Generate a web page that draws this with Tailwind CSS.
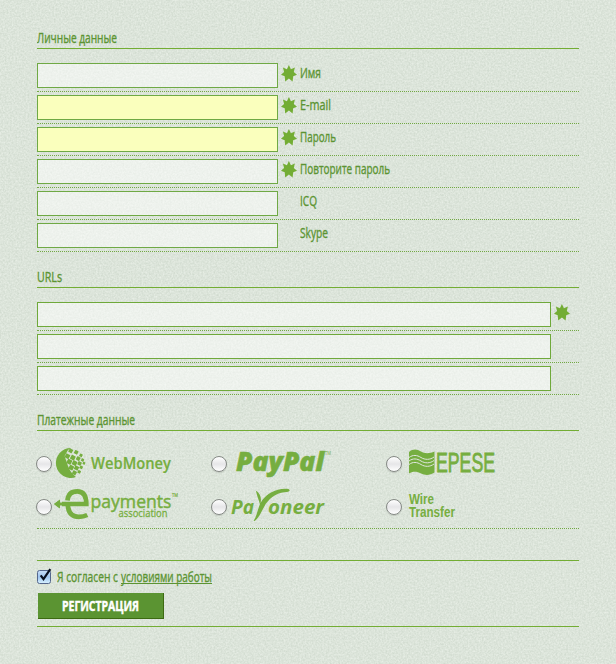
<!DOCTYPE html>
<html lang="ru"><head><meta charset="utf-8"><title>Регистрация</title>
<script src="https://cdn.jsdelivr.net/npm/@tailwindcss/browser@4"></script></head>
<body class="relative h-[664px] w-[616px] overflow-hidden bg-[#dce4db]" style="font-family:'Open Sans','Noto Sans',sans-serif">
<svg class="absolute inset-0 -z-10" width="616" height="664" aria-hidden="true">
<filter id="grain" x="0" y="0" width="100%" height="100%" color-interpolation-filters="sRGB"><feTurbulence type="fractalNoise" baseFrequency="0.57" numOctaves="2" seed="8"/><feColorMatrix values="0.13 0 0 0 0.797  0.11 0 0 0 0.84  0.13 0 0 0 0.79  0 0 0 0 1"/></filter>
<rect width="616" height="664" filter="url(#grain)"/></svg>
<svg class="hidden"><symbol id="star" viewBox="0 0 16 17"><path fill="#73ad34" d="M7.9 0 9.9 4.2 13.9 2.6 12.8 7 16 9.7 12.2 11.2 11.6 16.4 7.9 13.4 4.2 16.4 3.7 11.2 0 9.7 3.1 7 1.9 2.6 5.900 4.2Z"/></symbol></svg>
<main id="form" class="ml-[37px] w-[542px] pt-[28px]"></main>
<script>
const t=(x,y,w,s,txt,extra='')=>`<text x="${x}" y="${y}" textLength="${w}" lengthAdjust="spacingAndGlyphs" font-size="${s}" ${extra}>${txt}</text>`;
const ink='stroke="#5b9432" stroke-width=".35"';
const head=(s,w)=>`<h2 class="h-[21px] border-b border-[#73ad34]"><svg width="300" height="20" fill="#5b9432">${t(0,15,w,14,s,ink)}</svg></h2>`;
const star='<svg class="mb-[5px] ml-[3px]" width="16" height="17"><use href="#star"/></svg>';
const row=(bg,s,w,req)=>`<div class="flex h-8 items-center border-b border-dotted border-[#73a944]"><span class="h-[25px] w-[241px] border border-[#6fa944] ${bg}"></span>${req?star:'<i class="ml-[3px] w-4"></i>'}<svg class="ml-[3px]" width="200" height="31" fill="#5b9432">${t(0,18,w,14,s,ink)}</svg></div>`;
const url=req=>`<div class="flex h-8 items-center border-b border-dotted border-[#73a944]"><span class="h-[25px] w-[514px] border border-[#6fa93a] bg-white/50"></span>${req?star:''}</div>`;
const pay=(x,y,c)=>`<div class="flex items-center"><span class="mb-[2px] -ml-px h-4 w-4 shrink-0 rounded-full border border-[#858985] bg-linear-to-b from-white via-[#e6e6e8] to-white shadow-[0_1px_1px_#0002]"></span><svg class="ml-px shrink-0" width="150" height="43" viewBox="${x} ${y} 150 43" fill="#76ae40">${c}</svg></div>`;
const tiles=[[70.7,450.8,3.9],[76.2,452.3,3.7],[81,455.3,3],[67.4,456.2,4.5],[72.9,457.6,4.5],[78.2,458.6,3.8],[82.6,460,2.8],[69.3,461.8,4.7],[74.6,463.1,4.5],[79.6,463.4,3.7],[84,463.2,2.5],[71.3,467.6,4.6],[76.5,468,4.2],[81.2,467.3,3],[74.4,472.8,4],[79.2,471.8,3]];
const globe=`<path d="M71 448a15 15 0 1 0 5 29.1C72 474 69.5 470 68 466L64.6 456 68 450 71 448Z"/>`+tiles.map(([x,y,s])=>`<rect x="${x-s/2}" y="${y-s/2}" width="${s}" height="${s}" rx=".5" transform="rotate(28 ${x} ${y})"/>`).join('');
const e=`<path d="M54 504l5.200-3.800v2.400H66v2.900h-6.800v2.400Z"/><path fill="none" stroke="#76ae40" stroke-width="4.700" d="M67.500 500.500C68 494.500 71.500 491.300 77.200 491.300S86.300 495 86.300 504H62"/><path fill="none" stroke="#76ae40" stroke-width="4.700" d="M67.800 504C68 513 72 516.800 78.800 516.800Q83.500 516.800 87.300 515"/><path d="M54 504l6-4.500v9Z"/>`;
const leaf=`<path d="M255.800 490.500C260.500 493.500 262.200 499 260 504.500C259 500 257 496 255.800 490.500ZM253.600 520.800C257 516 257.500 509 260.500 503C266 493.500 277 487.800 288.500 489C291.500 490.500 288.500 492.300 284.500 492.300C275.500 493 268 499.500 264.300 506.500C261 512.500 258.500 518.500 254.600 521Z"/>`;
const wave=y=>`<path fill="none" stroke="#e0e7de" stroke-width="1" d="M409 ${y}C413 ${y-3} 417 ${y-2.5} 421 ${y}S430 ${y+2.5} 434 ${y-.5}"/>`;
const flag=`<path d="M409 452C413 448.500 417 449 421 451.500S430 453.500 434.500 451.500V472.500C430 475.500 425 475.500 421 473.500S413 471 409 473.500Z"/>`+wave(457.5)+wave(461)+wave(464.5);
const W='bg-white/50',Y='bg-[#faffbd]';
document.getElementById('form').innerHTML=
head('Личные данные',80)+'<div class="pt-[11px]">'+row(W,'Имя',21,1)+row(Y,'E-mail',31,1)+row(Y,'Пароль',36,1)+row(W,'Повторите пароль',90,1)+row(W,'ICQ',17)+row(W,'Skype',28)+'</div>'+
'<div class="h-[15px]"></div>'+head('URLs',25)+'<div class="pt-[11px]">'+url(1)+url()+url()+'</div>'+
'<div class="h-[15px]"></div>'+head('Платежные данные',98)+
'<div class="grid h-[98px] grid-cols-[175px_175px_192px] grid-rows-[43px_43px] border-b border-dotted border-[#73a944] pt-[12px]">'+
pay(53,443,globe+t(91,469,80,16.5,'WebMoney','font-weight="600" stroke="#76ae40" stroke-width=".2"'))+
pay(228,443,t(236,471,88,26.5,'PayPal','font-weight="800" font-style="italic" stroke="#76ae40" stroke-width=".5"')+t(325,455,6,5,'TM'))+
pay(403,443,flag+t(436,471.5,59,27,'EPESE','font-family="Liberation Sans" stroke="#76ae40" stroke-width=".8"'))+
pay(53,486,e+t(90.5,507.5,81,18.5,'payments','stroke="#76ae40" stroke-width=".45"')+t(118.5,516.8,49,11.5,'association','stroke="#76ae40" stroke-width=".3"')+t(172,497,6,5,'TM','stroke="#76ae40" stroke-width=".2"'))+
pay(228,486,t(231,513.5,23,20,'Pa','font-weight="700" font-style="italic"')+leaf+t(268,513.5,56,20,'oneer','font-weight="700" font-style="italic"'))+
pay(403,486,t(409,504,25,14,'Wire','font-weight="700" font-family="Liberation Sans"')+t(409,517,46,14,'Transfer','font-weight="700" font-family="Liberation Sans"'))+
`</div><div class="h-[31px]"></div><div class="h-[67px] border-y border-[#73ad34] pt-[7px]">
<label class="flex h-[18px]"><svg width="16" height="18"><defs><linearGradient id="box" x2="0" y2="1"><stop stop-color="#c9def8"/><stop offset=".5" stop-color="#9fc5f0"/><stop offset="1" stop-color="#d8f2ff"/></linearGradient></defs><rect x=".5" y="2.5" width="13" height="13" rx="2" fill="url(#box)" stroke="#55678c"/><path d="M3.7 7.3 6.5 11.2 13.3 1.2" fill="none" stroke="#0a1020" stroke-width="2.2"/></svg>
<svg class="ml-[4px]" width="180" height="20" fill="#5b9432">${t(0,14,61,14,'Я согласен с',ink)}${t(64,14,91,14,'условиями работы',ink)}<path d="M64 15.5H155" stroke="#5b9432"/></svg></label>
<button class="mt-[7px] ml-px block h-[26px] w-[126px] border-r border-b border-[#3d6b12] bg-[#5b9432]"><svg width="125" height="25" fill="#fff">${t(24,18,77,13.5,'РЕГИСТРАЦИЯ','font-weight="700" stroke="#fff" stroke-width=".5"')}</svg></button></div>`;
</script></body></html>
